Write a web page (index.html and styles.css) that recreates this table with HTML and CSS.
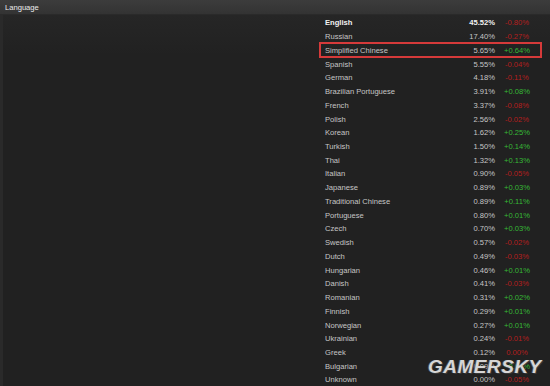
FILE: index.html
```html
<!DOCTYPE html>
<html>
<head>
<meta charset="utf-8">
<link rel="stylesheet" href="styles.css">
</head>
<body>
<div class="panel">
  <div class="header">Language</div>
  <div class="content">
    <div class="side"></div>
    <div class="stats">
      <div class="row top"><span class="name">English</span><span class="pct">45.52%</span><span class="chg neg">-0.80%</span></div>
      <div class="row"><span class="name">Russian</span><span class="pct">17.40%</span><span class="chg neg">-0.27%</span></div>
      <div class="row mark"><span class="name">Simplified Chinese</span><span class="pct">5.65%</span><span class="chg pos">+0.64%</span></div>
      <div class="row"><span class="name">Spanish</span><span class="pct">5.55%</span><span class="chg neg">-0.04%</span></div>
      <div class="row"><span class="name">German</span><span class="pct">4.18%</span><span class="chg neg">-0.11%</span></div>
      <div class="row"><span class="name">Brazilian Portuguese</span><span class="pct">3.91%</span><span class="chg pos">+0.08%</span></div>
      <div class="row"><span class="name">French</span><span class="pct">3.37%</span><span class="chg neg">-0.08%</span></div>
      <div class="row"><span class="name">Polish</span><span class="pct">2.56%</span><span class="chg neg">-0.02%</span></div>
      <div class="row"><span class="name">Korean</span><span class="pct">1.62%</span><span class="chg pos">+0.25%</span></div>
      <div class="row"><span class="name">Turkish</span><span class="pct">1.50%</span><span class="chg pos">+0.14%</span></div>
      <div class="row"><span class="name">Thai</span><span class="pct">1.32%</span><span class="chg pos">+0.13%</span></div>
      <div class="row"><span class="name">Italian</span><span class="pct">0.90%</span><span class="chg neg">-0.05%</span></div>
      <div class="row"><span class="name">Japanese</span><span class="pct">0.89%</span><span class="chg pos">+0.03%</span></div>
      <div class="row"><span class="name">Traditional Chinese</span><span class="pct">0.89%</span><span class="chg pos">+0.11%</span></div>
      <div class="row"><span class="name">Portuguese</span><span class="pct">0.80%</span><span class="chg pos">+0.01%</span></div>
      <div class="row"><span class="name">Czech</span><span class="pct">0.70%</span><span class="chg pos">+0.03%</span></div>
      <div class="row"><span class="name">Swedish</span><span class="pct">0.57%</span><span class="chg neg">-0.02%</span></div>
      <div class="row"><span class="name">Dutch</span><span class="pct">0.49%</span><span class="chg neg">-0.03%</span></div>
      <div class="row"><span class="name">Hungarian</span><span class="pct">0.46%</span><span class="chg pos">+0.01%</span></div>
      <div class="row"><span class="name">Danish</span><span class="pct">0.41%</span><span class="chg neg">-0.03%</span></div>
      <div class="row"><span class="name">Romanian</span><span class="pct">0.31%</span><span class="chg pos">+0.02%</span></div>
      <div class="row"><span class="name">Finnish</span><span class="pct">0.29%</span><span class="chg pos">+0.01%</span></div>
      <div class="row"><span class="name">Norwegian</span><span class="pct">0.27%</span><span class="chg pos">+0.01%</span></div>
      <div class="row"><span class="name">Ukrainian</span><span class="pct">0.24%</span><span class="chg neg">-0.01%</span></div>
      <div class="row"><span class="name">Greek</span><span class="pct">0.12%</span><span class="chg neg">0.00%</span></div>
      <div class="row"><span class="name">Bulgarian</span><span class="pct">0.09%</span><span class="chg pos">+0.01%</span></div>
      <div class="row"><span class="name">Unknown</span><span class="pct">0.00%</span><span class="chg neg">-0.05%</span></div>
    </div>
  </div>
  <div class="watermark">GAMERSKY</div>
</div>
</body>
</html>
```

FILE: styles.css
```css
html, body {
  margin: 0;
  padding: 0;
  background: #212121;
  height: 100%;
  overflow: hidden;
}

.panel {
  position: relative;
  width: 550px;
  height: 386px;
  font-family: "Liberation Sans", Arial, sans-serif;
  font-size: 7.6px;
  color: #c6c6c6;
  background: #212121;
}

.header {
  height: 15px;
  line-height: 15px;
  padding-left: 5px;
  box-sizing: border-box;
  color: #ececec;
  background: linear-gradient(to bottom, #3c3c3c 0%, #333333 100%);
  border-bottom: 1px solid #2a2a2a;
}

.content {
  display: flex;
  background: linear-gradient(to bottom, #262626 0px, #212121 40px);
}

.side {
  flex: 1;
  border-left: 3px solid #2a2a2a;
}

.stats {
  width: 221px;
  margin-right: 9px;
  padding-top: 1px;
  display: flex;
  flex-direction: column;
}

.row {
  display: flex;
  align-items: center;
  height: 13.74px;
  padding-left: 5px;
  white-space: nowrap;
}

.row.top {
  font-weight: bold;
  color: #f2f2f2;
}

.row.mark {
  outline: 2px solid #d63a3a;
  outline-offset: -1px;
}

.name {
  flex: 1;
}

.pct {
  text-align: right;
}

.chg {
  width: 34px;
  margin-left: 5px;
  margin-right: 7px;
  text-align: center;
  font-weight: normal;
}

.neg {
  color: #b51e1e;
}

.pos {
  color: #36b936;
}

.watermark {
  position: absolute;
  left: 428px;
  top: 356px;
  font-family: "Liberation Sans", Arial, sans-serif;
  font-size: 19px;
  font-weight: bold;
  font-style: italic;
  letter-spacing: 0.5px;
  color: #d6d6d6;
  text-shadow: 1px 1px 0 #3a3a3a, -1px 0 0 #555;
}
```
